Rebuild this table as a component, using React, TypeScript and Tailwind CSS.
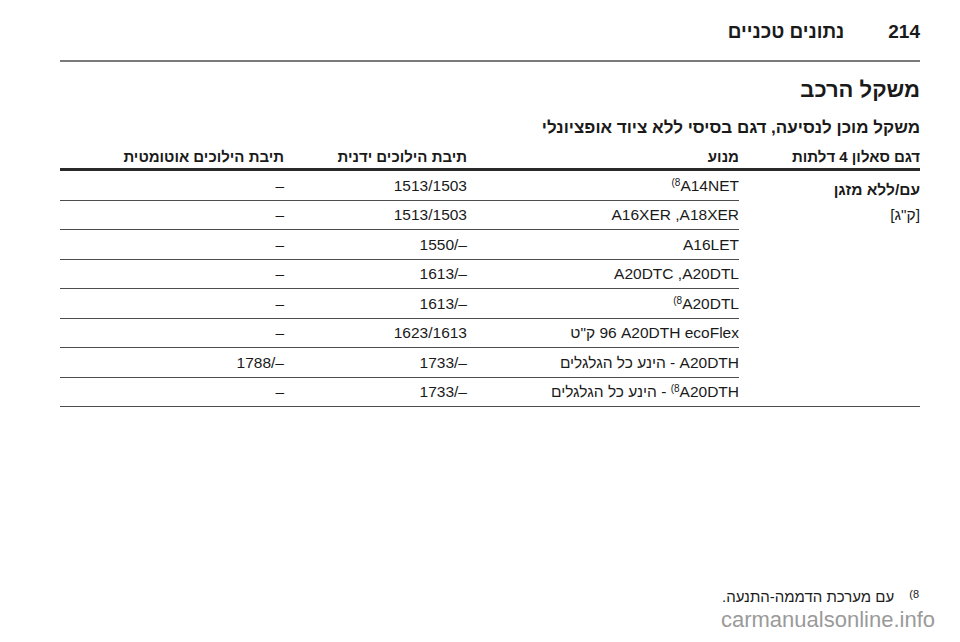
const rows: { engine: React.ReactNode; manual: string; auto: string }[] = [
  {
    engine: (
      <span dir="ltr">
        <sup className="text-[10px]">(8</sup>A14NET
      </span>
    ),
    manual: "1513/1503",
    auto: "–",
  },
  { engine: <span dir="ltr">A16XER ,A18XER</span>, manual: "1513/1503", auto: "–" },
  { engine: <span dir="ltr">A16LET</span>, manual: "1550/–", auto: "–" },
  { engine: <span dir="ltr">A20DTC ,A20DTL</span>, manual: "1613/–", auto: "–" },
  {
    engine: (
      <span dir="ltr">
        <sup className="text-[10px]">(8</sup>A20DTL
      </span>
    ),
    manual: "1613/–",
    auto: "–",
  },
  {
    engine: (
      <span dir="ltr">
        <bdi>ק"ט</bdi> 96 A20DTH ecoFlex
      </span>
    ),
    manual: "1623/1613",
    auto: "–",
  },
  {
    engine: (
      <span dir="ltr">
        <bdi>הינע כל הגלגלים</bdi> - A20DTH
      </span>
    ),
    manual: "1733/–",
    auto: "1788/–",
  },
  {
    engine: (
      <span dir="ltr">
        <bdi>הינע כל הגלגלים</bdi> - <sup className="text-[10px]">(8</sup>A20DTH
      </span>
    ),
    manual: "1733/–",
    auto: "–",
  },
];

export default function App() {
  return (
    <div
      dir="rtl"
      className="w-[960px] h-[642px] overflow-hidden bg-white pl-[60px] pr-[40px] pt-[21px] text-[#1a1a1a] flex flex-col"
      style={{ fontFamily: '"Liberation Sans", Arial, sans-serif' }}
    >
      {/* page header */}
      <div className="flex items-center gap-[44px] h-[22px]">
        <span dir="ltr" className="text-[19px] font-bold leading-[22px]">214</span>
        <span className="text-[19px] font-bold leading-[22px]">נתונים טכניים</span>
      </div>
      <div className="mt-[17px] h-[2px] bg-[#7a7a7a]" />

      <h1 className="mt-[14px] text-[22px] font-bold leading-[28px]">משקל הרכב</h1>
      <h2 className="mt-[13px] text-[17px] font-bold leading-[22px]">
        משקל מוכן לנסיעה, דגם בסיסי ללא ציוד אופציונלי
      </h2>

      {/* table */}
      <div className="mt-[8px] grid grid-cols-[181px_272px_183px_1fr] h-[24px] border-b-[3px] border-[#2a2a2a] text-[15px] font-bold leading-[20px]">
        <div>דגם סאלון 4 דלתות</div>
        <div>מנוע</div>
        <div>תיבת הילוכים ידנית</div>
        <div>תיבת הילוכים אוטומטית</div>
      </div>

      <div className="flex border-b-[1.5px] border-[#4d4d4d]">
        <div className="w-[181px] shrink-0 pt-[6px] text-[15.5px] leading-[25px]">
          <div className="font-bold">עם/ללא מזגן</div>
          <div>[ק"ג]</div>
        </div>
        <div className="flex-1 flex flex-col">
          {rows.map((r, i) => (
            <div
              key={i}
              className={
                i < rows.length - 1
                  ? "grid grid-cols-[272px_183px_1fr] items-center h-[29.5px] border-b-[1.5px] border-[#4d4d4d] text-[15.5px]"
                  : "grid grid-cols-[272px_183px_1fr] items-center h-[28px] text-[15.5px]"
              }
            >
              <div>{r.engine}</div>
              <div>
                <span dir="ltr">{r.manual}</span>
              </div>
              <div>
                <span dir="ltr">{r.auto}</span>
              </div>
            </div>
          ))}
        </div>
      </div>

      {/* footnote */}
      <div className="mt-auto flex items-start gap-[15px] pr-[1px] text-[15px] leading-[20px]">
        <span dir="ltr" className="text-[11px] leading-[14px]">(8</span>
        <span>עם מערכת הדממה-התנעה.</span>
      </div>
      <div dir="ltr" className="mb-[9px] -mr-[15px] text-right text-[22px] leading-[26px] text-[#9a9a9a]">
        carmanualsonline.info
      </div>
    </div>
  );
}
